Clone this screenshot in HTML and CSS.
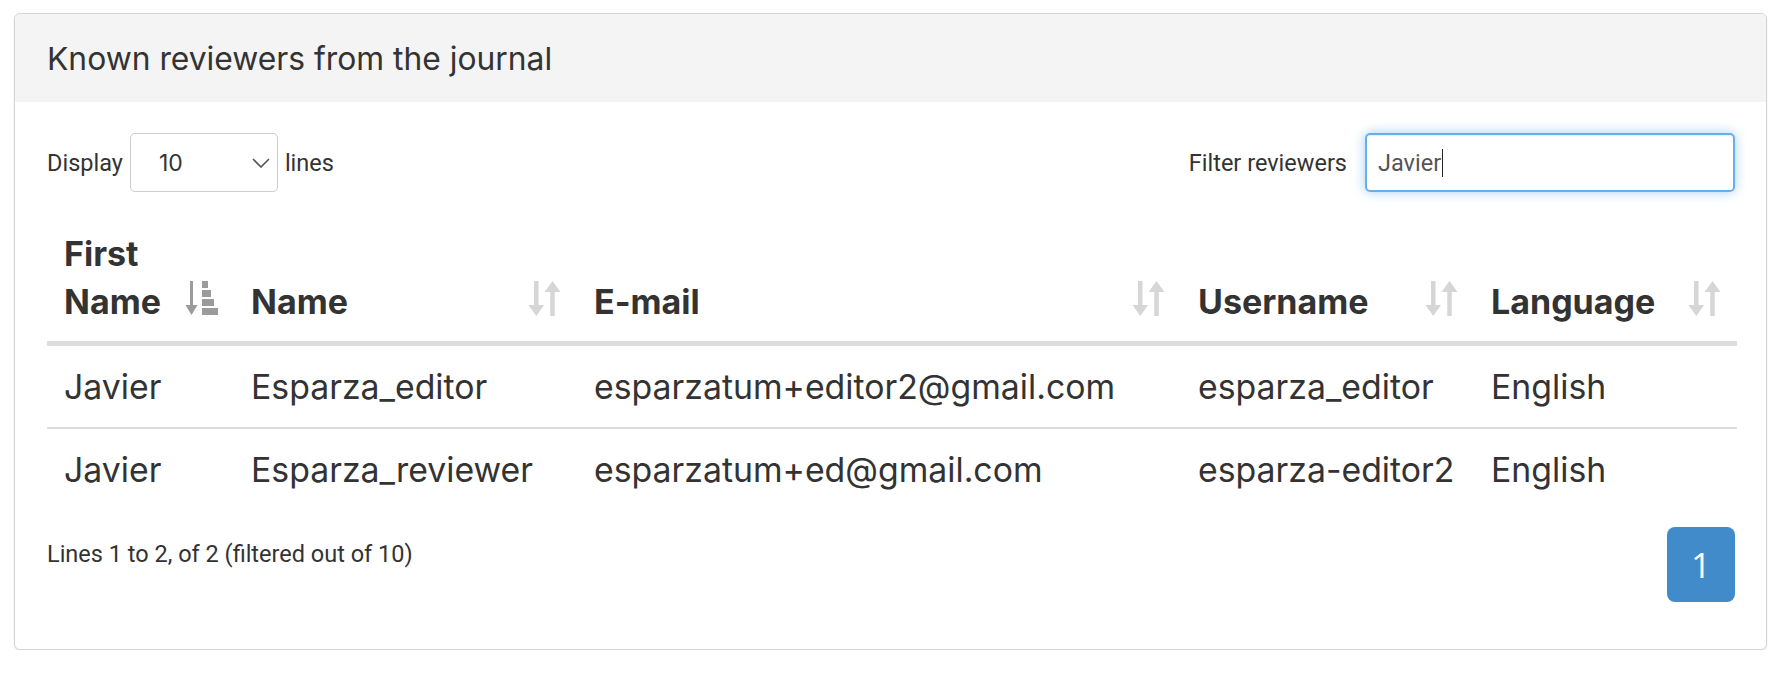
FILE: index.html
```html
<!DOCTYPE html>
<html lang="en">
<head>
<meta charset="utf-8">
<title>Known reviewers</title>
<link rel="stylesheet" href="styles.css">
</head>
<body>
<div class="card">
  <div class="card-header"><h3 class="card-title">Known reviewers from the journal</h3></div>
  <div class="card-body">
    <div class="controls">
      <div class="length">
        <span>Display</span>
        <div class="select"><span class="select-value">10</span>
          <svg class="chevron" width="18" height="10" viewBox="0 0 18 10"><polyline points="1,1 9,9 17,1" fill="none" stroke="#555" stroke-width="1.6"/></svg>
        </div>
        <span>lines</span>
      </div>
      <div class="filter">
        <span class="filter-label">Filter reviewers</span>
        <div class="search-input"><span>Javier</span><span class="caret"></span></div>
      </div>
    </div>

    <table class="grid">
      <colgroup>
        <col class="c1"><col class="c2"><col class="c3"><col class="c4"><col class="c5">
      </colgroup>
      <thead>
        <tr>
          <th>First Name
            <svg class="sort-icon active" width="34" height="34" viewBox="0 0 34 34">
              <rect x="5" y="0" width="3" height="25"/>
              <polygon points="0.5,24 12.5,24 6.5,34"/>
              <rect x="17" y="0" width="6" height="7"/>
              <rect x="17" y="9" width="9" height="7"/>
              <rect x="17" y="18" width="12" height="7"/>
              <rect x="17" y="27" width="16" height="7"/>
            </svg>
          </th>
          <th>Name
            <svg class="sort-icon" width="33" height="35" viewBox="0 0 33 35"><rect x="6" y="0" width="4.5" height="25"/><polygon points="0.5,24 16,24 8.25,35"/><polygon points="16.5,11 32.5,11 24.5,0"/><rect x="22.25" y="10" width="4.5" height="25"/></svg>
          </th>
          <th>E-mail
            <svg class="sort-icon" width="33" height="35" viewBox="0 0 33 35"><rect x="6" y="0" width="4.5" height="25"/><polygon points="0.5,24 16,24 8.25,35"/><polygon points="16.5,11 32.5,11 24.5,0"/><rect x="22.25" y="10" width="4.5" height="25"/></svg>
          </th>
          <th>Username
            <svg class="sort-icon" width="33" height="35" viewBox="0 0 33 35"><rect x="6" y="0" width="4.5" height="25"/><polygon points="0.5,24 16,24 8.25,35"/><polygon points="16.5,11 32.5,11 24.5,0"/><rect x="22.25" y="10" width="4.5" height="25"/></svg>
          </th>
          <th>Language
            <svg class="sort-icon" width="33" height="35" viewBox="0 0 33 35"><rect x="6" y="0" width="4.5" height="25"/><polygon points="0.5,24 16,24 8.25,35"/><polygon points="16.5,11 32.5,11 24.5,0"/><rect x="22.25" y="10" width="4.5" height="25"/></svg>
          </th>
        </tr>
      </thead>
      <tbody>
        <tr>
          <td>Javier</td>
          <td>Esparza_editor</td>
          <td>esparzatum+editor2@gmail.com</td>
          <td>esparza_editor</td>
          <td>English</td>
        </tr>
        <tr>
          <td>Javier</td>
          <td>Esparza_reviewer</td>
          <td>esparzatum+ed@gmail.com</td>
          <td>esparza-editor2</td>
          <td>English</td>
        </tr>
      </tbody>
    </table>

    <div class="footer">
      <div class="info">Lines 1 to 2, of 2 (filtered out of 10)</div>
      <div class="pagination"><span class="page active">1</span></div>
    </div>
  </div>
</div>
</body>
</html>
```

FILE: styles.css
```css
html, body {
  margin: 0;
  padding: 0;
  background: #ffffff;
}

body {
  padding: 13px 18px 0 14px;
  font-family: Inter, "Noto Sans", sans-serif;
  color: #333333;
}

.card {
  border: 1px solid #d4d4d4;
  border-radius: 6px;
  box-shadow: 0 1px 2px rgba(0, 0, 0, 0.1);
  background: #ffffff;
  width: 1753px;
  box-sizing: border-box;
}

.card-header {
  height: 88px;
  box-sizing: border-box;
  background: #f4f4f4;
  border-radius: 6px 6px 0 0;
  display: flex;
  align-items: center;
  padding: 2px 32px 0;
}

.card-title {
  margin: 0;
  font-size: 31.8px;
  font-weight: 400;
  line-height: 1.1;
  color: #333333;
}

.card-body {
  padding: 31px 31px 47px 32px;
}

.controls {
  display: flex;
  justify-content: space-between;
  align-items: center;
  height: 59px;
  font-family: Roboto, "Liberation Sans", sans-serif;
  font-size: 23.5px;
  color: #333333;
}

.length {
  display: flex;
  align-items: center;
  gap: 7px;
}

.select {
  width: 148px;
  height: 59px;
  box-sizing: border-box;
  border: 1px solid #cccccc;
  border-radius: 5px;
  display: flex;
  align-items: center;
  justify-content: space-between;
  padding: 0 7px 0 28px;
  background: #ffffff;
}

.select-value {
  font-family: Inter, sans-serif;
  font-size: 23px;
  color: #333333;
}

.filter {
  display: flex;
  align-items: center;
  gap: 18px;
}

.search-input {
  width: 370px;
  height: 59px;
  box-sizing: border-box;
  border: 2px solid #66afe9;
  border-radius: 5px;
  box-shadow: inset 0 1px 1px rgba(0, 0, 0, 0.075), 0 0 12px rgba(102, 175, 233, 0.6);
  display: flex;
  align-items: center;
  padding: 0 11px;
  color: #555555;
  font-size: 23.5px;
}

.caret {
  display: inline-block;
  width: 0;
  height: 28px;
  border-left: 1.5px solid #222222;
  margin-left: 1px;
}

.grid {
  margin-top: 21px;
  width: 1690px;
  border-collapse: collapse;
  table-layout: fixed;
}

.c1 { width: 187px; }
.c2 { width: 343px; }
.c3 { width: 604px; }
.c4 { width: 293px; }
.c5 { width: 263px; }

.grid th {
  position: relative;
  text-align: left;
  vertical-align: bottom;
  font-size: 34px;
  font-weight: 700;
  line-height: 47.5px;
  padding: 17px 56px 16px 17px;
  border-bottom: 5px solid #dddddd;
  color: #333333;
}

.sort-icon {
  position: absolute;
  right: 16px;
  bottom: 25px;
  fill: #d6d6d6;
}

.sort-icon.active {
  right: 15px;
  bottom: 26px;
  fill: #9b9b9b;
}

.grid td {
  font-size: 33.8px;
  line-height: 48px;
  padding: 16.5px 17px 16.5px;
  color: #333333;
  white-space: nowrap;
}

.grid tbody tr + tr td {
  border-top: 2px solid #dddddd;
}

.footer {
  margin-top: 17px;
  display: flex;
  justify-content: space-between;
  align-items: flex-start;
}

.info {
  font-family: Roboto, "Liberation Sans", sans-serif;
  font-size: 23.5px;
  line-height: 32px;
  padding-top: 11px;
  color: #333333;
}

.pagination {
  display: flex;
}

.page {
  width: 68px;
  height: 75px;
  box-sizing: border-box;
  display: flex;
  align-items: center;
  justify-content: center;
  border-radius: 8px;
  background: #428bca;
  color: #ffffff;
  font-family: "Open Sans", sans-serif;
  font-size: 35px;
  font-weight: 400;
}
```
